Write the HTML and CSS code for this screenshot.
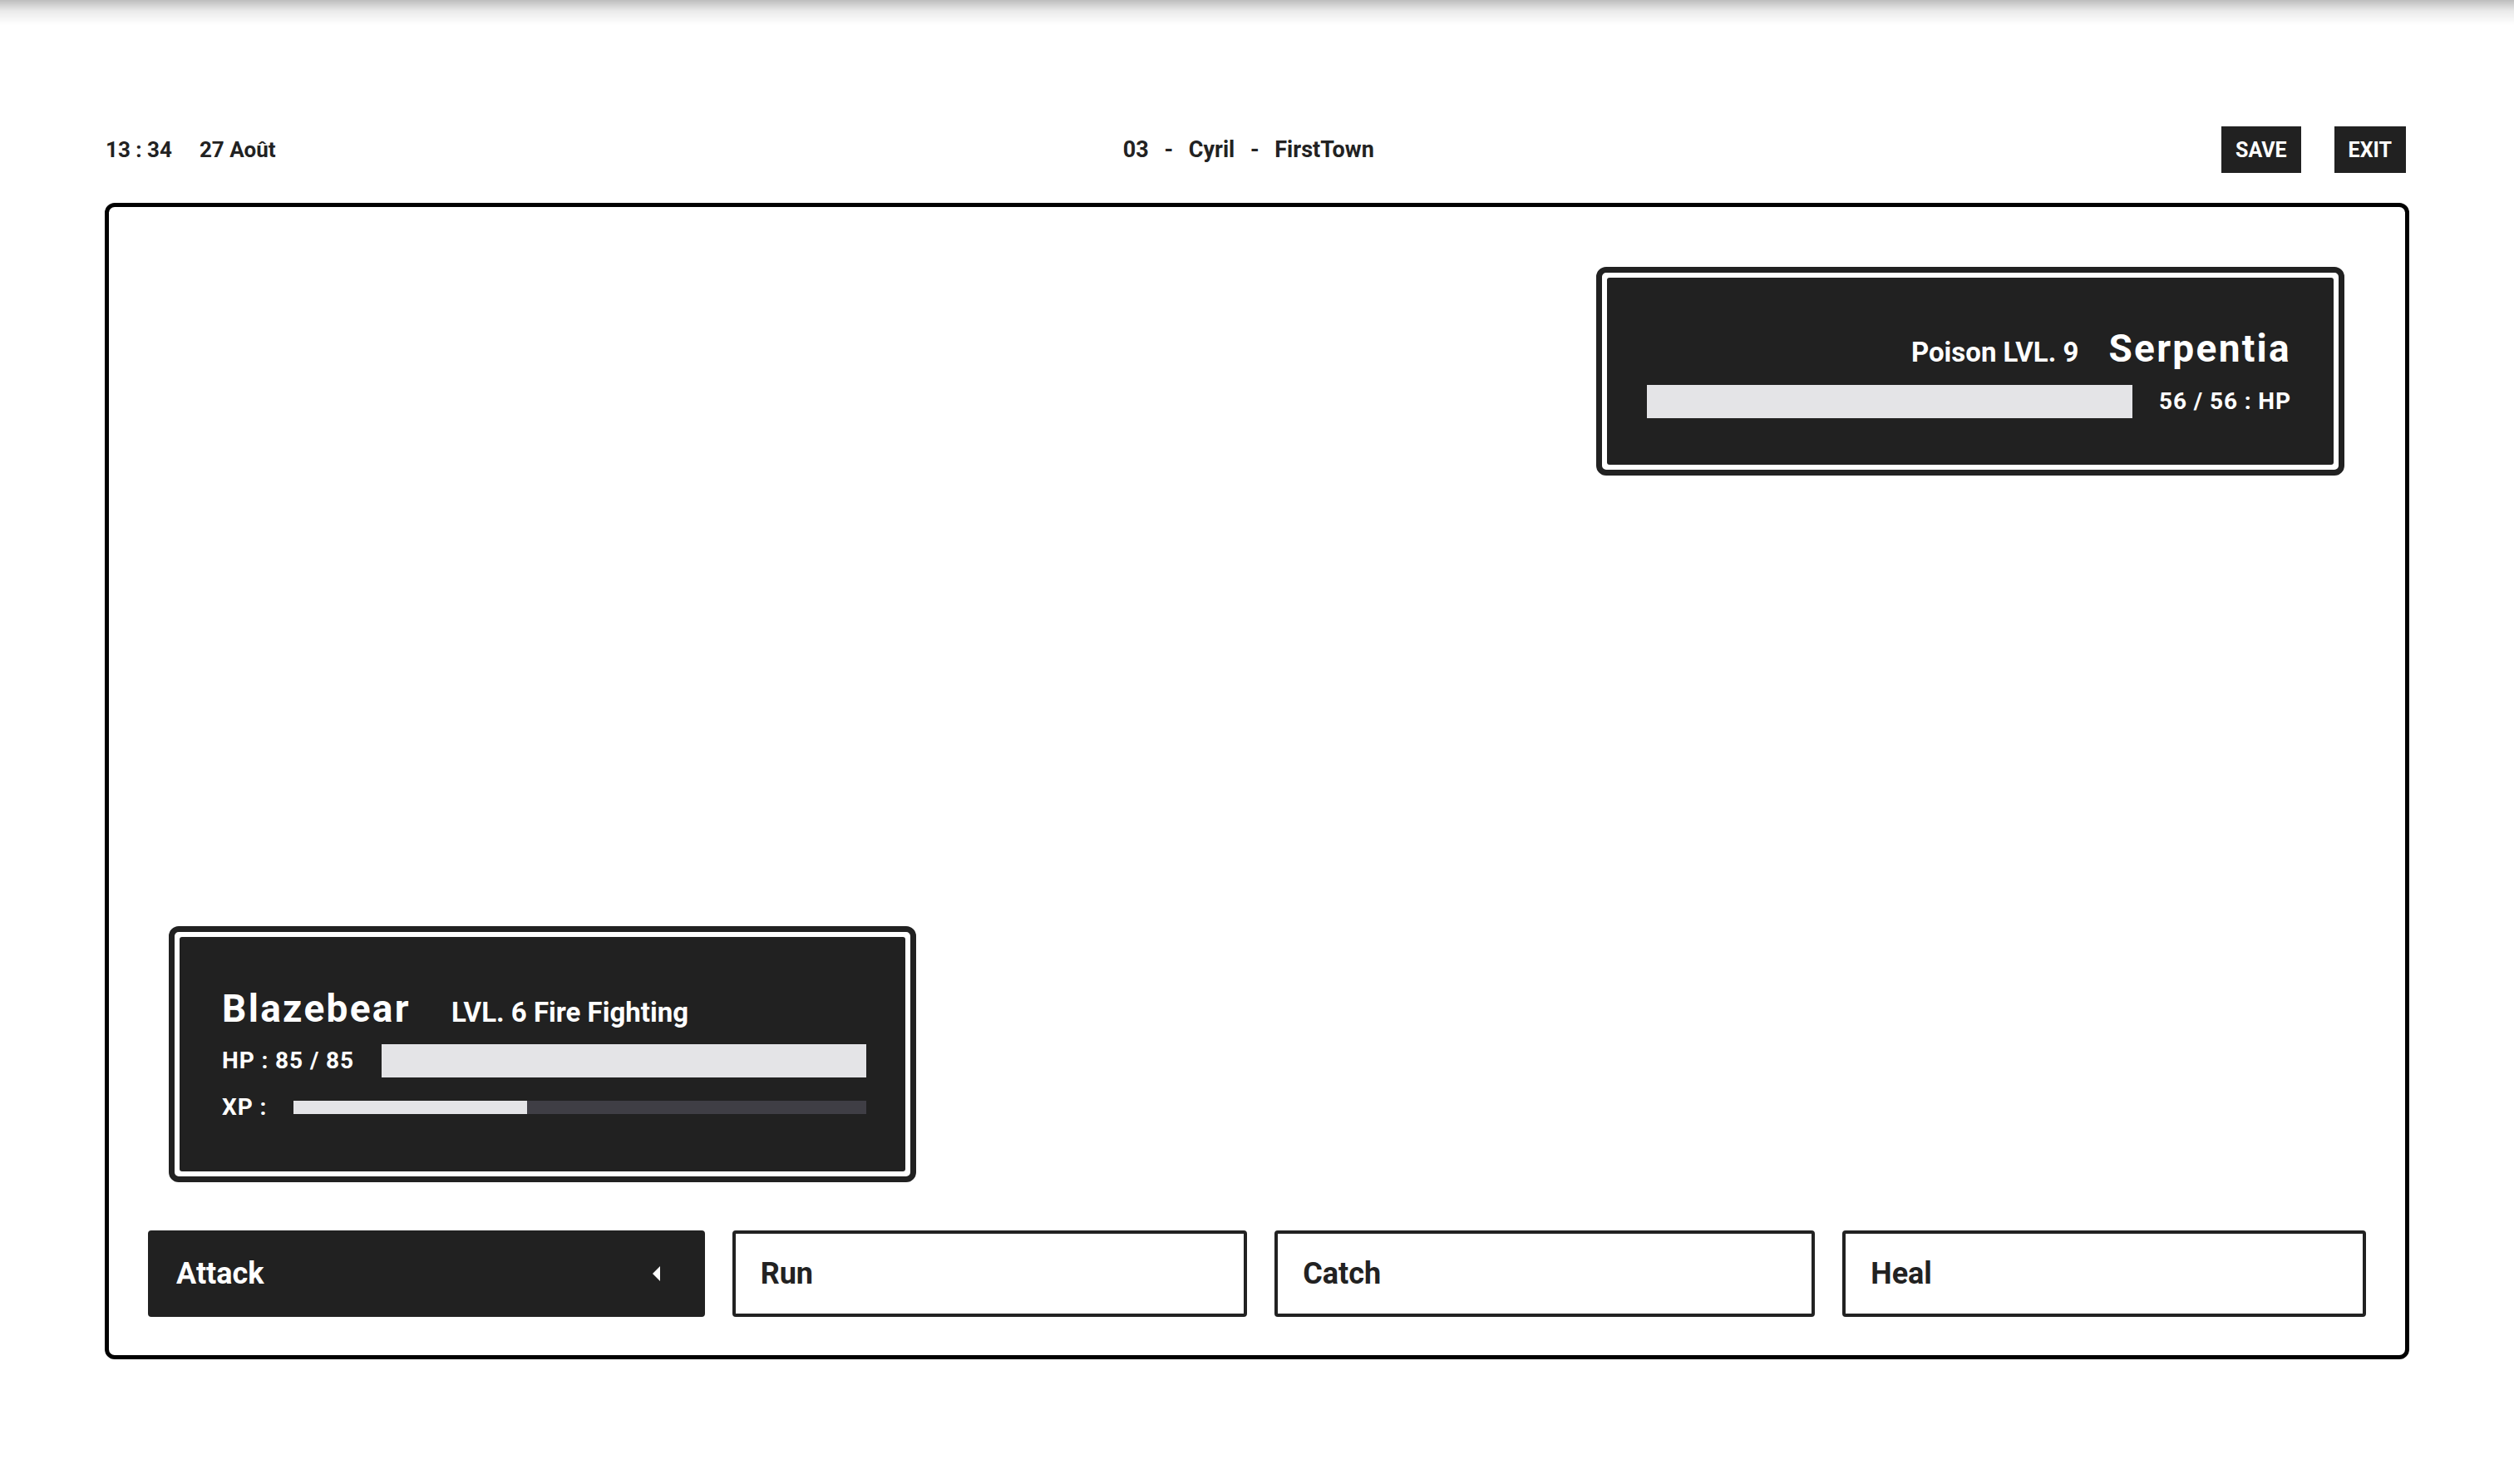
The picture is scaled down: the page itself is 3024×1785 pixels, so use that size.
FILE: index.html
```html
<!DOCTYPE html>
<html lang="fr">
<head>
<meta charset="utf-8">
<title>Battle</title>
<link rel="stylesheet" href="styles.css">
</head>
<body>
<div class="page">
  <header class="topbar">
    <div class="clock"><span>13 : 34</span><span>27 Août</span></div>
    <div class="location">03 - Cyril - FirstTown</div>
    <div class="menu">
      <button class="menu-btn">SAVE</button>
      <button class="menu-btn">EXIT</button>
    </div>
  </header>

  <main class="battle">
    <section class="arena">
      <div class="card-frame enemy">
        <div class="card">
          <div class="name-row">
            <span class="meta">Poison LVL. 9</span>
            <span class="name">Serpentia</span>
          </div>
          <div class="stat-row hp-row">
            <div class="bar hp"><div class="fill" style="width:100%"></div></div>
            <span class="stat">56 / 56 : HP</span>
          </div>
        </div>
      </div>

      <div class="card-frame player">
        <div class="card">
          <div class="name-row">
            <span class="name">Blazebear</span>
            <span class="meta">LVL. 6 Fire Fighting</span>
          </div>
          <div class="stat-row hp-row">
            <span class="stat">HP : 85 / 85</span>
            <div class="bar hp"><div class="fill" style="width:100%"></div></div>
          </div>
          <div class="stat-row xp-row">
            <span class="stat">XP :</span>
            <div class="bar xp"><div class="fill" style="width:40.8%"></div></div>
          </div>
        </div>
      </div>
    </section>

    <nav class="actions">
      <button class="action active">Attack<span class="cursor"></span></button>
      <button class="action">Run</button>
      <button class="action">Catch</button>
      <button class="action">Heal</button>
    </nav>
  </main>
</div>
</body>
</html>
```

FILE: styles.css
```css
* { box-sizing: border-box; }

html, body {
  margin: 0;
  padding: 0;
  background: #ffffff;
}

body {
  font-family: Roboto, "Liberation Sans", Arial, sans-serif;
  font-weight: 700;
  color: #222222;
}

body::before {
  content: "";
  position: fixed;
  top: 0;
  left: 0;
  right: 0;
  height: 30px;
  background: linear-gradient(to bottom, rgba(0,0,0,0.26), rgba(0,0,0,0.08) 45%, rgba(0,0,0,0));
  pointer-events: none;
}

.page {
  padding: 152px 126px 0;
}

/* top bar */
.topbar {
  height: 56px;
  margin-bottom: 36px;
  padding-right: 4px;
  display: flex;
  align-items: center;
  justify-content: space-between;
  font-size: 26px;
}

.clock {
  display: flex;
  gap: 33px;
  padding-left: 1px;
}

.location {
  word-spacing: 12px;
  font-size: 27px;
}

.menu {
  display: flex;
  gap: 40px;
}

.menu-btn {
  height: 56px;
  padding: 0 17px;
  border: 0;
  border-radius: 0;
  background: #212121;
  color: #ffffff;
  font-family: inherit;
  font-weight: 700;
  font-size: 25px;
  line-height: 1;
}

/* battle box */
.battle {
  height: 1391px;
  border: 5px solid #000000;
  border-radius: 12px;
  padding: 46px 47px;
  display: flex;
  flex-direction: column;
  gap: 32px;
}

.arena {
  flex: 1;
  display: flex;
  flex-direction: column;
  justify-content: space-between;
  padding: 26px 26px 26px 25px;
}

.card-frame {
  width: 900px;
  border: 7px solid #212121;
  border-radius: 12px;
  padding: 6px;
  background: #ffffff;
}

.enemy { align-self: flex-end; }
.player { align-self: flex-start; width: 899px; }

.card {
  background: #212121;
  border-radius: 3px;
  color: #ffffff;
}

.enemy .card { padding: 62px 51px 56px 48px; }
.player .card { padding: 63px 47px 63px 51px; }

.name-row {
  display: flex;
  align-items: baseline;
  line-height: 1;
}

.enemy .name-row { justify-content: flex-end; gap: 36px; }
.player .name-row { gap: 49px; }

.name {
  font-size: 46px;
  letter-spacing: 2.3px;
}

.meta {
  font-size: 33px;
}

.stat-row {
  display: flex;
  align-items: center;
  gap: 33px;
}

.hp-row { margin-top: 20px; }
.enemy .hp-row { margin-top: 21px; gap: 32px; }
.xp-row { margin-top: 22px; gap: 32px; }

.stat {
  font-size: 28px;
  line-height: 1;
  letter-spacing: 0.9px;
  white-space: nowrap;
}

.bar {
  flex: 1;
  background: #3f3e45;
}

.bar.hp { height: 40px; }
.bar.xp { height: 16px; }

.fill {
  height: 100%;
  background: #e4e4e7;
}

/* actions */
.actions {
  display: flex;
  gap: 33px;
}

.action {
  position: relative;
  flex: 1 1 auto;
  height: 104px;
  padding: 0 30px;
  border: 4px solid #222222;
  border-radius: 4px;
  background: #ffffff;
  color: #222222;
  font-family: inherit;
  font-weight: 700;
  font-size: 36px;
  line-height: 1;
  text-align: left;
}

.action.active {
  padding-right: 38px;
  background: #212121;
  border-color: #212121;
  color: #ffffff;
}

.cursor {
  position: absolute;
  right: 50px;
  top: 50%;
  transform: translateY(-50%);
  width: 0;
  height: 0;
  border-top: 9.5px solid transparent;
  border-bottom: 9.5px solid transparent;
  border-right: 9px solid #ffffff;
}
```
